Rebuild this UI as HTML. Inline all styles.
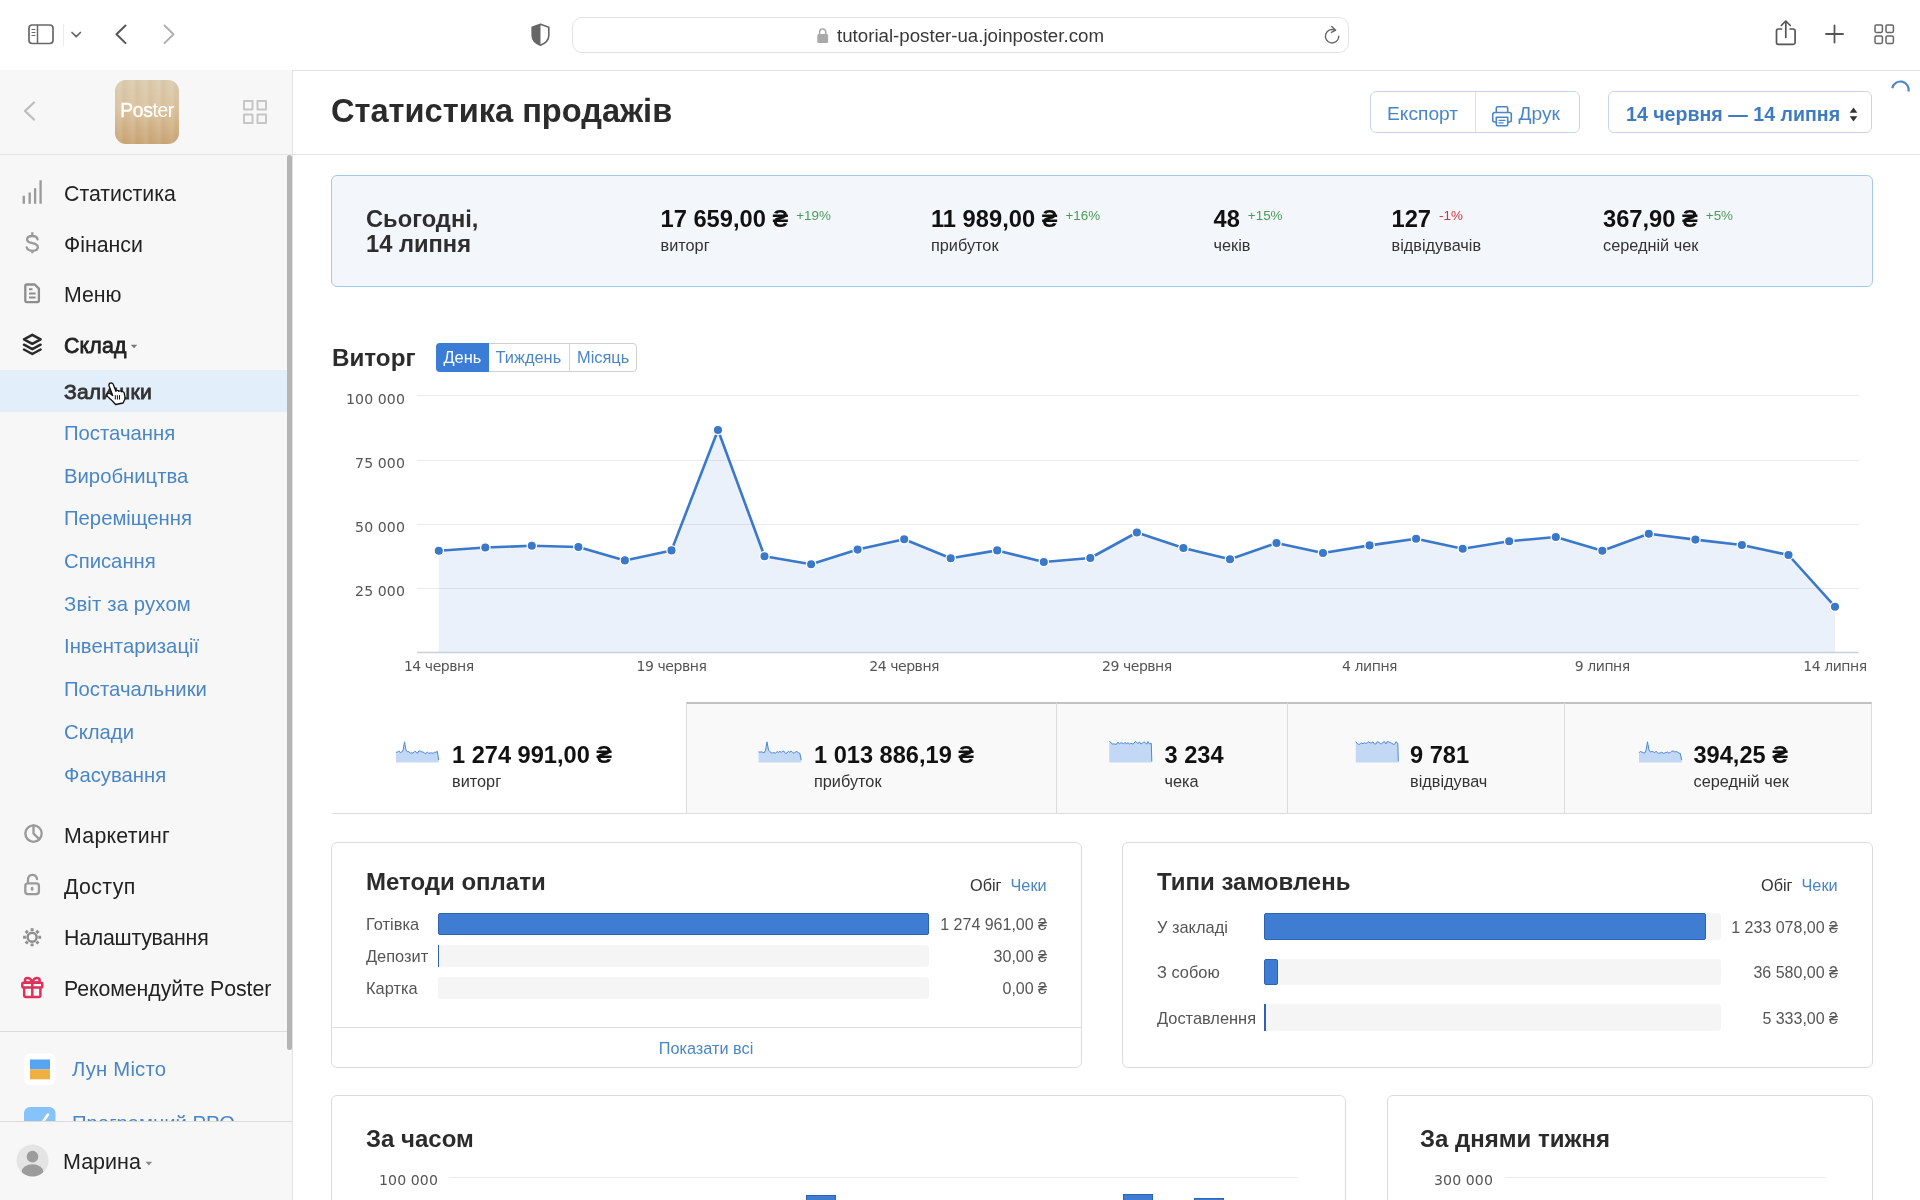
<!DOCTYPE html>
<html lang="uk">
<head>
<meta charset="utf-8">
<title>Статистика продажів</title>
<style>
*{box-sizing:border-box;margin:0;padding:0}
html,body{width:1920px;height:1200px;overflow:hidden;background:#fff}
body{font-family:"Liberation Sans",sans-serif;color:#222;position:relative}
.a{position:absolute;white-space:nowrap}
.dv{font-family:"DejaVu Sans","Liberation Sans",sans-serif}
svg{position:absolute;overflow:visible}
#root{position:absolute;left:0;top:0;width:1920px;height:1200px;overflow:hidden;will-change:transform}
/* browser chrome */
#chrome{left:0;top:0;width:1920px;height:70.5px;background:#fff;border-bottom:1.5px solid #e2e2e2}
#url{left:572px;top:16.5px;width:776.5px;height:36.5px;border:1.5px solid #e2e2e2;border-radius:10px;background:#fff}
#urltxt{left:837px;top:25px;font-size:18.7px;line-height:22px;color:#383838}
/* sidebar */
#side{left:0;top:70px;width:293px;height:1130px;background:#f7f7f7;border-right:1px solid #e2e2e2}
#sidehead{left:0;top:70px;width:292px;height:85px;border-bottom:1px solid #e4e4e4}
#logo{left:115px;top:80px;width:64px;height:64px;border-radius:11px;background:repeating-linear-gradient(90deg,rgba(255,255,255,0) 0,rgba(255,255,255,.08) 5px,rgba(150,110,60,.06) 9px,rgba(255,255,255,0) 13px),linear-gradient(180deg,#dcccb0 0%,#dac3a0 45%,#c9a575 100%);overflow:hidden}
#logo span{position:absolute;left:5.3px;top:19px;font-size:19.3px;line-height:24px;color:#fff;letter-spacing:-0.35px}
#logo b{font-weight:normal;-webkit-text-stroke:0.4px #fff}
.mi{left:64px;font-size:21.3px;line-height:26px;color:#222}
.sm{left:64px;font-size:20.3px;line-height:26px;color:#4a86c5}
#sel{left:0;top:369.5px;width:287px;height:42px;background:#e3eefb}
#scroll{left:287px;top:155px;width:5px;height:895px;background:#b4b4b4;border-radius:3px}
#sdiv{left:0;top:1031px;width:287px;height:1px;background:#dcdcdc}
#foot{left:0;top:1121px;width:292px;height:79px;background:#f7f7f7;border-top:1px solid #dcdcdc}
/* main */
#mainhead{left:293px;top:154px;width:1627px;height:1px;background:#e6e6e6}
#title{left:331px;top:92px;font-size:32.6px;line-height:38px;font-weight:bold;color:#2b2b2b}
.btn{border:1px solid #c8d5e6;border-radius:6px;background:#fff;color:#4a86c5;font-size:19.2px;line-height:40px;height:42px}
#today{left:331px;top:175px;width:1542px;height:112px;background:#f3f7fc;border:1px solid #a8c9e6;border-radius:6px}
.tv{font-size:23.7px;line-height:28px;font-weight:bold;color:#111;top:205px}
.tl{font-size:16.3px;line-height:20px;color:#333;top:235px}
.pc{font-size:13.4px;line-height:16px;top:207px}
.g{color:#4c9a57}.r{color:#d0343a}
.h2{font-size:24px;line-height:30px;font-weight:bold;color:#2b2b2b}
.ax{font-size:14.1px;line-height:18px;color:#555;font-family:"DejaVu Sans","Liberation Sans",sans-serif;letter-spacing:0.1px}
.axx{letter-spacing:-0.45px;font-size:14px}
.card{border:1px solid #dcdcdc;border-radius:6px;background:#fff}
.bl{font-size:16.4px;line-height:20px;color:#555}
.bv{font-size:16px;line-height:20px;color:#555;text-align:right;margin-top:1px}
.track{height:22px;background:#f5f5f5;border-radius:3px}
.fill{height:22px;background:#3f7dd3;border:1px solid #2e62b3;border-radius:2px}
.sv{font-size:23.6px;line-height:28px;font-weight:bold;color:#111}
.sl{font-size:16.3px;line-height:20px;color:#333;margin-top:1px}
</style>
</head>
<body>
<div id="root">
<!-- BROWSER CHROME -->
<div id="chrome" class="a"></div>
<div id="url" class="a"></div>
<div id="urltxt" class="a">tutorial-poster-ua.joinposter.com</div>

<svg class="a" style="left:0;top:0" width="1920" height="70" viewBox="0 0 1920 70" fill="none" stroke-linecap="round" stroke-linejoin="round">
 <!-- sidebar toggle -->
 <rect x="29" y="25" width="24" height="18.5" rx="3.2" stroke="#686868" stroke-width="1.7"/>
 <path d="M37.5 25.5V43" stroke="#686868" stroke-width="1.5"/>
 <path d="M32 29.5h3M32 32.5h3M32 35.5h3" stroke="#686868" stroke-width="1.2"/>
 <path d="M63.5 24v22" stroke="#ececec" stroke-width="1"/>
 <path d="M72 32.5l4.2 4.2 4.2-4.2" stroke="#666" stroke-width="1.7"/>
 <path d="M125.5 25.5l-9 8.8 9 8.8" stroke="#555" stroke-width="2"/>
 <path d="M164.5 25.5l9 8.8-9 8.8" stroke="#b0b0b0" stroke-width="2"/>
 <!-- shield -->
 <path d="M540.5 24.2l8.3 3v8.2c0 4.6-3.6 7.9-8.3 9.8-4.700-1.900-8.300-5.200-8.300-9.800v-8.200z" stroke="#666" stroke-width="1.6"/>
 <path d="M540.5 24.200v21c-4.700-1.900-8.300-5.200-8.300-9.800v-8.200z" fill="#666" stroke="none"/>
 <!-- lock -->
 <rect x="817.300" y="34" width="10.800" height="9" rx="1.500" fill="#a9a9a9"/>
 <path d="M819.600 34.500v-2.300a3.100 3.100 0 0 1 6.200 0v2.300" stroke="#a9a9a9" stroke-width="1.500"/>
 <!-- reload -->
 <path d="M1338.800 36.200a6.700 6.700 0 1 1-3.400-5.800" stroke="#666" stroke-width="1.400"/>
 <path d="M1331.800 26.500l3.800 3.700-4.200 2.200" stroke="#666" stroke-width="1.400"/>
 <!-- share -->
 <path d="M1781.500 29h-3.200a1.800 1.800 0 0 0-1.800 1.800v11.700a1.800 1.800 0 0 0 1.800 1.800h15a1.800 1.800 0 0 0 1.800-1.800v-11.700a1.800 1.800 0 0 0-1.800-1.800h-3.200" stroke="#555" stroke-width="1.700"/>
 <path d="M1785.800 37.500v-16M1781.300 25.500l4.500-4.500 4.500 4.500" stroke="#555" stroke-width="1.700"/>
 <!-- plus -->
 <path d="M1826 34h17M1834.500 25.500v17" stroke="#555" stroke-width="1.800"/>
 <!-- grid -->
 <rect x="1875" y="25" width="7.400" height="7.400" rx="1.300" stroke="#666" stroke-width="1.500"/>
 <rect x="1886" y="25" width="7.400" height="7.400" rx="1.300" stroke="#666" stroke-width="1.500"/>
 <rect x="1875" y="36" width="7.400" height="7.400" rx="1.300" stroke="#666" stroke-width="1.500"/>
 <rect x="1886" y="36" width="7.400" height="7.400" rx="1.300" stroke="#666" stroke-width="1.500"/>
</svg>


<!-- SIDEBAR -->
<div id="side" class="a"></div>
<div id="sidehead" class="a"></div>
<div id="logo" class="a"><span><b>Pos</b>ter</span></div>

<svg class="a" style="left:0;top:70px" width="293" height="1130" viewBox="0 70 293 1130" fill="none" stroke-linecap="round" stroke-linejoin="round">
 <!-- header back + grid -->
 <path d="M34 102.500l-9 8.500 9 8.500" stroke="#bdbdbd" stroke-width="2.300"/>
 <g stroke="#c6c6c6" stroke-width="2">
  <rect x="244" y="101" width="8.500" height="8.500"/><rect x="257.500" y="101" width="8.500" height="8.500"/>
  <rect x="244" y="114.500" width="8.500" height="8.500"/><rect x="257.500" y="114.500" width="8.500" height="8.500"/>
 </g>
 <!-- stats bars -->
 <g stroke="#9a9a9a" stroke-width="2.300" stroke-linecap="butt">
  <path d="M23.800 195.800v8M29.700 192.500v11.300M35.100 188.300v15.500M40.600 180.300v23.500"/>
 </g>
 <!-- dollar -->
 <path d="M37.600 239.300c-.5-2.200-2.500-3.300-5.300-3.300-3 0-5.200 1.300-5.200 3.500 0 2.300 2 3 5.200 3.600 3.300.7 5.600 1.500 5.600 4 0 2.300-2.200 3.700-5.500 3.700-3 0-5.100-1.200-5.700-3.500" stroke="#9a9a9a" stroke-width="2.300"/>
 <path d="M32.300 232.300v3.500M32.300 250v3.300" stroke="#9a9a9a" stroke-width="2.300" stroke-linecap="butt"/>
 <!-- document -->
 <path d="M26.800 284.500h8l4.100 4.100v12a1.500 1.500 0 0 1-1.500 1.500h-10.600a1.500 1.500 0 0 1-1.500-1.500v-14.600a1.500 1.500 0 0 1 1.500-1.500z" stroke="#8e8e8e" stroke-width="2.300"/>
 <path d="M29 289.200h3.500M29 293.400h6.600M29 297.600h6.600" stroke="#8e8e8e" stroke-width="2" stroke-linecap="butt"/>
 <!-- layers -->
 <g stroke="#2a2a2a" stroke-width="2.500">
  <path d="M32.300 334.800l8.300 4.500-8.300 4.500-8.300-4.500z"/>
  <path d="M24 344.700l8.300 4.500 8.300-4.500M24 349.500l8.300 4.500 8.300-4.500"/>
 </g>
 <path d="M130.800 344.700h6.400l-3.200 3.600z" fill="#777" stroke="none"/>
 <!-- pie -->
 <g stroke="#9a9a9a" stroke-width="2.300">
  <circle cx="33.500" cy="833.600" r="8.200"/>
  <path d="M33.500 825.500v8.100l5.800 5.600"/>
  <path d="M30 826.800a7.500 7.500 0 0 0 0 13.600" stroke-width="1.200"/>
 </g>
 <!-- unlock -->
 <g stroke="#9a9a9a" stroke-width="2.300">
  <rect x="25.300" y="883.300" width="13.600" height="10.800" rx="2.600"/>
  <path d="M28 883v-3.400a4.500 4.500 0 0 1 9-.6"/>
  <path d="M32.100 888v1.400" stroke-width="2.600"/>
 </g>
 <!-- gear -->
 <g stroke="#8e8e8e">
  <circle cx="32.1" cy="937.2" r="4.500" stroke-width="2.500"/>
  <path d="M38.30 937.20L41.10 937.20M36.48 941.58L38.46 943.56M32.10 943.40L32.10 946.20M27.72 941.58L25.74 943.56M25.90 937.20L23.10 937.20M27.72 932.82L25.74 930.84M32.10 931.00L32.10 928.20M36.48 932.82L38.46 930.84" stroke-width="3" stroke-linecap="butt"/>
 </g>
 <!-- gift -->
 <g stroke="#e0315b" stroke-width="2.500">
  <rect x="22.300" y="982.800" width="20" height="4.800" rx="1"/>
  <path d="M24.200 988v7.800a1.200 1.200 0 0 0 1.200 1.200h13.800a1.200 1.200 0 0 0 1.200-1.200v-7.800M32.300 983v14"/>
  <path d="M32.300 982.500c-1-3-2.500-4.600-4.700-4.600-1.600 0-2.700 1-2.700 2.300s1.100 2.300 2.700 2.300zM32.300 982.500c1-3 2.500-4.600 4.700-4.600 1.600 0 2.700 1 2.700 2.300s-1.100 2.300-2.700 2.300z"/>
 </g>
 <!-- Lun misto -->
 <rect x="24" y="1053.500" width="31.500" height="31.500" rx="6" fill="#fff" stroke="none"/>
 <rect x="30" y="1059.500" width="20" height="10" fill="#56a4f2" stroke="none"/>
 <rect x="30" y="1069.500" width="20" height="9.800" fill="#f0b040" stroke="none"/>
 <!-- prro -->
 <rect x="24" y="1107" width="31.500" height="31.500" rx="6" fill="#86c3fb" stroke="none"/>
 <path d="M43.500 1121l4.500-6.500" stroke="#fff" stroke-width="2.600"/>
</svg>

<div id="sel" class="a"></div>
<div class="a mi" style="top:181px">Статистика</div>
<div class="a mi" style="top:232px">Фінанси</div>
<div class="a mi" style="top:282px">Меню</div>
<div class="a mi" style="top:333px;-webkit-text-stroke:0.8px #222;letter-spacing:0.2px">Склад</div>
<div class="a sm" style="top:379px;color:#333;-webkit-text-stroke:0.8px #333;font-size:21.1px;letter-spacing:0.2px">Залишки</div>
<div class="a sm" style="top:420px">Постачання</div>
<div class="a sm" style="top:463px">Виробництва</div>
<div class="a sm" style="top:505px">Переміщення</div>
<div class="a sm" style="top:548px">Списання</div>
<div class="a sm" style="top:591px;letter-spacing:0.15px">Звіт за рухом</div>
<div class="a sm" style="top:633px">Інвентаризації</div>
<div class="a sm" style="top:676px">Постачальники</div>
<div class="a sm" style="top:719px">Склади</div>
<div class="a sm" style="top:762px">Фасування</div>
<div class="a mi" style="top:823px;letter-spacing:0.28px">Маркетинг</div>
<div class="a mi" style="top:874px;letter-spacing:0.37px">Доступ</div>
<div class="a mi" style="top:925px;letter-spacing:-0.23px">Налаштування</div>
<div class="a mi" style="top:976px;letter-spacing:-0.07px">Рекомендуйте Poster</div>
<div id="sdiv" class="a"></div>
<div class="a sm" style="left:72px;top:1056px;letter-spacing:0.2px">Лун Місто</div>
<div class="a sm" style="left:72px;top:1110px">Програмний РРО</div>
<div id="scroll" class="a"></div>
<div id="foot" class="a"></div>
<svg class="a" style="left:16px;top:1144px" width="33" height="33" viewBox="0 0 33 33">
 <defs><clipPath id="avc"><circle cx="16.500" cy="16.500" r="16"/></clipPath></defs>
 <circle cx="16.500" cy="16.500" r="16" fill="#e4e4e4"/>
 <g clip-path="url(#avc)" fill="#9c9c9c"><circle cx="16.500" cy="12.600" r="5.800"/><ellipse cx="16.500" cy="27.500" rx="10.800" ry="7.200"/></g>
</svg>
<svg class="a" style="left:145px;top:1161px" width="8" height="5" viewBox="0 0 8 5"><path d="M.6.700h6.600l-3.300 3.700z" fill="#8a8a8a"/></svg>
<div class="a mi" style="left:63px;top:1149px;font-size:21.5px">Марина</div>

<svg class="a" style="left:106px;top:382px" width="20" height="24" viewBox="0 0 20 24">
 <path d="M4.200 1.200c1.200-.5 2.600 0 3.100 1.300l2.600 6.800c.5-1 2.200-1.200 3 0 .7-.8 2.300-.6 2.800.5.800-.5 2.200 0 2.500 1.200l.7 3.500c.3 1.600 0 3-.8 4.300l-1 2.200-7.500 1.500c-2-2.500-4.500-5-7.500-7.500-1.200-1-1.500-2.300-.7-3.200.8-.9 2.200-.8 3.300.1l2 1.700-3.600-9.600c-.4-1.200 0-2.300 1.100-2.800z" fill="#fff" stroke="#111" stroke-width="1.300" stroke-linejoin="round"/>
 <path d="M9.300 13.200v4.300M11.400 13.200v4.300M13.500 13.200v4.300" stroke="#111" stroke-width="1"/>
</svg>
<!-- MAIN HEADER -->
<div id="mainhead" class="a"></div>
<div id="title" class="a">Статистика продажів</div>

<div class="a btn" style="left:1370px;top:91px;width:210px"></div>
<div class="a" style="left:1475px;top:92px;width:1px;height:40px;background:#d3e1f1"></div>
<div class="a" style="left:1387px;top:103px;font-size:19.2px;line-height:22px;color:#4a86c5">Експорт</div>
<svg class="a" style="left:1491px;top:104px" width="22" height="24" viewBox="0 0 22 24" fill="none" stroke="#4a86c5" stroke-width="1.600" stroke-linejoin="round" stroke-linecap="round">
 <path d="M5.300 8.500v-4.200a1.500 1.500 0 0 1 1.500-1.500h8.400a1.500 1.500 0 0 1 1.500 1.500v4.200"/>
 <path d="M5.300 18h-1.600a2 2 0 0 1-2-2v-5.500a2 2 0 0 1 2-2h14.600a2 2 0 0 1 2 2v5.500a2 2 0 0 1-2 2h-1.600"/>
 <path d="M5.300 13.200h11.400v7.300a1.200 1.200 0 0 1-1.200 1.200h-9a1.200 1.200 0 0 1-1.200-1.200z"/>
 <path d="M8 16.300h6M8 18.900h4" stroke-width="1.300"/>
</svg>
<div class="a" style="left:1518.5px;top:103px;font-size:19.2px;line-height:22px;color:#4a86c5">Друк</div>
<div class="a btn" style="left:1608px;top:91px;width:264px"></div>
<div class="a" style="left:1626px;top:103px;font-size:19.6px;line-height:22px;color:#3f7bc0;font-weight:bold">14 червня — 14 липня</div>
<svg class="a" style="left:1849px;top:107px" width="9" height="15" viewBox="0 0 9 15"><path d="M4.500 .5l3.800 5.300h-7.600zM4.500 14.500l3.800-5.300h-7.600z" fill="#333"/></svg>
<svg class="a" style="left:0;top:70px" width="1920" height="40" viewBox="0 70 1920 40" fill="none"><path d="M1892.300 88.200A8.300 8.300 0 0 1 1908.600 91.500" stroke="#4a86c8" stroke-width="2.200"/></svg>


<!-- TODAY -->
<div id="today" class="a"></div>

<div class="a" style="left:366px;top:207px;font-size:23.7px;line-height:25.3px;font-weight:bold;color:#2e2e2e;white-space:normal;width:200px">Сьогодні,<br>14 липня</div>
<div class="a tv" style="left:660.5px">17 659,00 ₴<span class="pc g" style="font-weight:normal;font-size:13.4px;position:relative;top:-7.5px;margin-left:8px">+19%</span></div>
<div class="a tl" style="left:660.5px">виторг</div>
<div class="a tv" style="left:931px">11 989,00 ₴<span class="pc g" style="font-weight:normal;font-size:13.4px;position:relative;top:-7.5px;margin-left:8px">+16%</span></div>
<div class="a tl" style="left:931px">прибуток</div>
<div class="a tv" style="left:1213.5px">48<span class="pc g" style="font-weight:normal;font-size:13.4px;position:relative;top:-7.5px;margin-left:8px">+15%</span></div>
<div class="a tl" style="left:1213.5px">чеків</div>
<div class="a tv" style="left:1391.5px">127<span class="pc r" style="font-weight:normal;font-size:13.4px;position:relative;top:-7.5px;margin-left:8px">-1%</span></div>
<div class="a tl" style="left:1391.5px">відвідувачів</div>
<div class="a tv" style="left:1603px">367,90 ₴<span class="pc g" style="font-weight:normal;font-size:13.4px;position:relative;top:-7.5px;margin-left:8px">+5%</span></div>
<div class="a tl" style="left:1603px">середній чек</div>


<!-- CHART -->

<div class="a h2" style="left:332px;top:343px;font-size:24.2px">Виторг</div>
<div class="a" style="left:436px;top:343px;width:201px;height:29px;border:1px solid #d0d0d0;border-radius:4px;background:#fff"></div>
<div class="a" style="left:436px;top:343px;width:53px;height:29px;background:#3b7dd6;border-radius:4px 0 0 4px"></div>
<div class="a" style="left:569px;top:344px;width:1px;height:27px;background:#d6d6d6"></div>
<div class="a" style="left:443.500px;top:348px;font-size:16.400px;line-height:19px;color:#fff">День</div>
<div class="a" style="left:495.500px;top:348px;font-size:16.400px;line-height:19px;color:#4a86c5">Тиждень</div>
<div class="a" style="left:577px;top:348px;font-size:16.400px;line-height:19px;color:#4a86c5">Місяць</div>
<svg class="a" style="left:0;top:0" width="1920" height="700" viewBox="0 0 1920 700" fill="none">
 <path d="M417 395.5H1858.5" stroke="#ebebeb" stroke-width="1.2"/><path d="M417 460.5H1858.5" stroke="#ebebeb" stroke-width="1.2"/><path d="M417 524.5H1858.5" stroke="#ebebeb" stroke-width="1.2"/><path d="M417 588.5H1858.5" stroke="#ebebeb" stroke-width="1.2"/>
 <path d="M438.8 550.8 L485.3 547.5 L531.8 545.8 L578.4 547.0 L624.9 560.4 L671.5 550.4 L718.0 430.0 L764.5 556.2 L811.1 564.2 L857.6 549.6 L904.2 539.2 L950.7 558.3 L997.2 550.4 L1043.8 562.0 L1090.3 558.0 L1136.9 532.5 L1183.4 548.0 L1230.0 559.2 L1276.5 543.0 L1323.0 553.0 L1369.6 545.4 L1416.1 538.8 L1462.7 548.8 L1509.2 541.2 L1555.8 537.0 L1602.3 550.8 L1648.8 533.8 L1695.4 539.6 L1741.9 545.0 L1788.5 555.0 L1835.0 606.7 L1835.0 652.5 L438.8 652.5 Z" fill="#3b7ad0" fill-opacity="0.1" stroke="none"/>
 <path d="M417 652.500H1858.500" stroke="#c5cfdd" stroke-width="1.500"/>
 <path d="M438.8 550.8 L485.3 547.5 L531.8 545.8 L578.4 547.0 L624.9 560.4 L671.5 550.4 L718.0 430.0 L764.5 556.2 L811.1 564.2 L857.6 549.6 L904.2 539.2 L950.7 558.3 L997.2 550.4 L1043.8 562.0 L1090.3 558.0 L1136.9 532.5 L1183.4 548.0 L1230.0 559.2 L1276.5 543.0 L1323.0 553.0 L1369.6 545.4 L1416.1 538.8 L1462.7 548.8 L1509.2 541.2 L1555.8 537.0 L1602.3 550.8 L1648.8 533.8 L1695.4 539.6 L1741.9 545.0 L1788.5 555.0 L1835.0 606.7" stroke="#3a78ca" stroke-width="2.600" stroke-linejoin="round" stroke-linecap="round"/>
 <g fill="#3a78ca" stroke="#fff" stroke-width="1.300"><circle cx="438.8" cy="550.8" r="4.700"/><circle cx="485.3" cy="547.5" r="4.700"/><circle cx="531.8" cy="545.8" r="4.700"/><circle cx="578.4" cy="547.0" r="4.700"/><circle cx="624.9" cy="560.4" r="4.700"/><circle cx="671.5" cy="550.4" r="4.700"/><circle cx="718.0" cy="430.0" r="4.700"/><circle cx="764.5" cy="556.2" r="4.700"/><circle cx="811.1" cy="564.2" r="4.700"/><circle cx="857.6" cy="549.6" r="4.700"/><circle cx="904.2" cy="539.2" r="4.700"/><circle cx="950.7" cy="558.3" r="4.700"/><circle cx="997.2" cy="550.4" r="4.700"/><circle cx="1043.8" cy="562.0" r="4.700"/><circle cx="1090.3" cy="558.0" r="4.700"/><circle cx="1136.9" cy="532.5" r="4.700"/><circle cx="1183.4" cy="548.0" r="4.700"/><circle cx="1230.0" cy="559.2" r="4.700"/><circle cx="1276.5" cy="543.0" r="4.700"/><circle cx="1323.0" cy="553.0" r="4.700"/><circle cx="1369.6" cy="545.4" r="4.700"/><circle cx="1416.1" cy="538.8" r="4.700"/><circle cx="1462.7" cy="548.8" r="4.700"/><circle cx="1509.2" cy="541.2" r="4.700"/><circle cx="1555.8" cy="537.0" r="4.700"/><circle cx="1602.3" cy="550.8" r="4.700"/><circle cx="1648.8" cy="533.8" r="4.700"/><circle cx="1695.4" cy="539.6" r="4.700"/><circle cx="1741.9" cy="545.0" r="4.700"/><circle cx="1788.5" cy="555.0" r="4.700"/><circle cx="1835.0" cy="606.7" r="4.700"/></g>
</svg>
<div class="a ax" style="left:305px;width:100px;text-align:right;top:390.0px">100 000</div>
<div class="a ax" style="left:305px;width:100px;text-align:right;top:454.0px">75 000</div>
<div class="a ax" style="left:305px;width:100px;text-align:right;top:518.0px">50 000</div>
<div class="a ax" style="left:305px;width:100px;text-align:right;top:582.0px">25 000</div>
<div class="a ax axx" style="left:378.8px;width:120px;text-align:center;top:657px">14 червня</div>
<div class="a ax axx" style="left:611.5px;width:120px;text-align:center;top:657px">19 червня</div>
<div class="a ax axx" style="left:844.2px;width:120px;text-align:center;top:657px">24 червня</div>
<div class="a ax axx" style="left:1076.9px;width:120px;text-align:center;top:657px">29 червня</div>
<div class="a ax axx" style="left:1309.6px;width:120px;text-align:center;top:657px">4 липня</div>
<div class="a ax axx" style="left:1542.3px;width:120px;text-align:center;top:657px">9 липня</div>
<div class="a ax axx" style="left:1775.0px;width:120px;text-align:center;top:657px">14 липня</div>


<!-- SUMMARY -->

<div class="a" style="left:686px;top:702px;width:1186px;height:112px;background:#f9f9f9;border:1px solid #dcdcdc;border-top:2px solid #c2c2c2"></div>
<div class="a" style="left:1056px;top:703px;width:1px;height:110px;background:#dcdcdc"></div>
<div class="a" style="left:1287px;top:703px;width:1px;height:110px;background:#dcdcdc"></div>
<div class="a" style="left:1564px;top:703px;width:1px;height:110px;background:#dcdcdc"></div>
<div class="a" style="left:332px;top:813px;width:355px;height:1px;background:#dedede"></div>
<svg class="a" style="left:0;top:700px" width="1920" height="120" viewBox="0 700 1920 120">
<path d="M396.0 752.3 L397.4 752.1 L398.8 751.1 L400.3 752.3 L401.7 752.2 L403.1 750.1 L404.5 741.8 L406.0 750.1 L407.4 751.9 L408.8 751.5 L410.2 753.2 L411.7 752.7 L413.1 753.2 L414.5 751.4 L415.9 751.7 L417.4 753.3 L418.8 751.0 L420.2 751.0 L421.6 751.8 L423.0 751.9 L424.5 753.1 L425.9 753.4 L427.3 752.1 L428.7 753.3 L430.2 753.0 L431.6 752.8 L433.0 753.4 L434.4 752.3 L435.9 752.3 L437.3 751.3 L438.7 760.1 L438.7 762.5999999999999 L396.0 762.5999999999999 Z" fill="#c3d8f5" stroke="none"/><path d="M396.0 752.3 L397.4 752.1 L398.8 751.1 L400.3 752.3 L401.7 752.2 L403.1 750.1 L404.5 741.8 L406.0 750.1 L407.4 751.9 L408.8 751.5 L410.2 753.2 L411.7 752.7 L413.1 753.2 L414.5 751.4 L415.9 751.7 L417.4 753.3 L418.8 751.0 L420.2 751.0 L421.6 751.8 L423.0 751.9 L424.5 753.1 L425.9 753.4 L427.3 752.1 L428.7 753.3 L430.2 753.0 L431.6 752.8 L433.0 753.4 L434.4 752.3 L435.9 752.3 L437.3 751.3 L438.7 760.1" stroke="#4a88d6" stroke-width="1" fill="none" stroke-linejoin="round"/><path d="M758.5 751.8 L759.9 752.2 L761.3 751.8 L762.8 752.3 L764.2 752.8 L765.6 750.1 L767.0 741.8 L768.5 750.1 L769.9 751.7 L771.3 752.7 L772.7 752.9 L774.2 752.7 L775.6 753.3 L777.0 751.5 L778.4 752.4 L779.9 751.3 L781.3 752.5 L782.7 751.1 L784.1 751.3 L785.5 753.4 L787.0 752.9 L788.4 751.2 L789.8 752.3 L791.2 751.0 L792.7 752.5 L794.1 753.3 L795.5 751.9 L796.9 751.5 L798.4 752.8 L799.8 753.2 L801.2 760.1 L801.2 762.5999999999999 L758.5 762.5999999999999 Z" fill="#c3d8f5" stroke="none"/><path d="M758.5 751.8 L759.9 752.2 L761.3 751.8 L762.8 752.3 L764.2 752.8 L765.6 750.1 L767.0 741.8 L768.5 750.1 L769.9 751.7 L771.3 752.7 L772.7 752.9 L774.2 752.7 L775.6 753.3 L777.0 751.5 L778.4 752.4 L779.9 751.3 L781.3 752.5 L782.7 751.1 L784.1 751.3 L785.5 753.4 L787.0 752.9 L788.4 751.2 L789.8 752.3 L791.2 751.0 L792.7 752.5 L794.1 753.3 L795.5 751.9 L796.9 751.5 L798.4 752.8 L799.8 753.2 L801.2 760.1" stroke="#4a88d6" stroke-width="1" fill="none" stroke-linejoin="round"/><path d="M1109.3 741.5 L1110.7 742.2 L1112.2 744.1 L1113.6 743.8 L1115.0 744.2 L1116.5 744.3 L1117.9 742.1 L1119.3 744.0 L1120.8 742.8 L1122.2 743.1 L1123.6 743.9 L1125.1 742.3 L1126.5 744.1 L1127.9 742.5 L1129.4 744.2 L1130.8 743.2 L1132.2 743.9 L1133.7 743.7 L1135.1 741.5 L1136.5 742.1 L1138.0 743.6 L1139.4 741.8 L1140.8 743.9 L1142.3 743.3 L1143.7 741.9 L1145.1 742.5 L1146.6 744.2 L1148.0 741.5 L1149.4 743.9 L1151.3 743.4 L1151.8 761.5 L1152.3 762.5999999999999 L1109.3 762.5999999999999 Z" fill="#c3d8f5" stroke="none"/><path d="M1109.3 741.5 L1110.7 742.2 L1112.2 744.1 L1113.6 743.8 L1115.0 744.2 L1116.5 744.3 L1117.9 742.1 L1119.3 744.0 L1120.8 742.8 L1122.2 743.1 L1123.6 743.9 L1125.1 742.3 L1126.5 744.1 L1127.9 742.5 L1129.4 744.2 L1130.8 743.2 L1132.2 743.9 L1133.7 743.7 L1135.1 741.5 L1136.5 742.1 L1138.0 743.6 L1139.4 741.8 L1140.8 743.9 L1142.3 743.3 L1143.7 741.9 L1145.1 742.5 L1146.6 744.2 L1148.0 741.5 L1149.4 743.9 L1151.3 743.4 L1151.8 761.5" stroke="#4a88d6" stroke-width="1" fill="none" stroke-linejoin="round"/><path d="M1355.8 741.5 L1357.2 743.6 L1358.7 744.3 L1360.1 744.2 L1361.5 742.7 L1363.0 743.8 L1364.4 742.7 L1365.8 743.4 L1367.3 743.1 L1368.7 741.6 L1370.1 743.0 L1371.6 742.8 L1373.0 741.9 L1374.4 743.9 L1375.9 744.0 L1377.3 741.7 L1378.7 742.0 L1380.2 743.7 L1381.6 743.9 L1383.0 742.2 L1384.5 741.6 L1385.9 743.9 L1387.3 741.6 L1388.8 741.8 L1390.2 742.7 L1391.6 743.2 L1393.1 744.2 L1394.5 744.4 L1395.9 741.6 L1397.8 743.4 L1398.3 761.5 L1398.8 762.5999999999999 L1355.8 762.5999999999999 Z" fill="#c3d8f5" stroke="none"/><path d="M1355.8 741.5 L1357.2 743.6 L1358.7 744.3 L1360.1 744.2 L1361.5 742.7 L1363.0 743.8 L1364.4 742.7 L1365.8 743.4 L1367.3 743.1 L1368.7 741.6 L1370.1 743.0 L1371.6 742.8 L1373.0 741.9 L1374.4 743.9 L1375.9 744.0 L1377.3 741.7 L1378.7 742.0 L1380.2 743.7 L1381.6 743.9 L1383.0 742.2 L1384.5 741.6 L1385.9 743.9 L1387.3 741.6 L1388.8 741.8 L1390.2 742.7 L1391.6 743.2 L1393.1 744.2 L1394.5 744.4 L1395.9 741.6 L1397.8 743.4 L1398.3 761.5" stroke="#4a88d6" stroke-width="1" fill="none" stroke-linejoin="round"/><path d="M1639.0 752.8 L1640.4 751.4 L1641.8 752.0 L1643.3 752.7 L1644.7 753.0 L1646.1 750.1 L1647.5 741.8 L1649.0 750.1 L1650.4 752.1 L1651.8 751.3 L1653.2 751.9 L1654.7 752.7 L1656.1 751.2 L1657.5 752.9 L1658.9 753.4 L1660.3 752.8 L1661.8 752.3 L1663.2 753.3 L1664.6 753.0 L1666.0 752.5 L1667.5 752.0 L1668.9 753.1 L1670.3 752.5 L1671.7 751.2 L1673.2 751.0 L1674.6 751.8 L1676.0 751.7 L1677.4 752.0 L1678.9 753.1 L1680.3 753.4 L1681.7 760.1 L1681.7 762.5999999999999 L1639.0 762.5999999999999 Z" fill="#c3d8f5" stroke="none"/><path d="M1639.0 752.8 L1640.4 751.4 L1641.8 752.0 L1643.3 752.7 L1644.7 753.0 L1646.1 750.1 L1647.5 741.8 L1649.0 750.1 L1650.4 752.1 L1651.8 751.3 L1653.2 751.9 L1654.7 752.7 L1656.1 751.2 L1657.5 752.9 L1658.9 753.4 L1660.3 752.8 L1661.8 752.3 L1663.2 753.3 L1664.6 753.0 L1666.0 752.5 L1667.5 752.0 L1668.9 753.1 L1670.3 752.5 L1671.7 751.2 L1673.2 751.0 L1674.6 751.8 L1676.0 751.7 L1677.4 752.0 L1678.9 753.1 L1680.3 753.4 L1681.7 760.1" stroke="#4a88d6" stroke-width="1" fill="none" stroke-linejoin="round"/>
</svg>
<div class="a sv" style="left:452px;top:741px">1 274 991,00 ₴</div><div class="a sl" style="left:452px;top:770px">виторг</div>
<div class="a sv" style="left:814px;top:741px">1 013 886,19 ₴</div><div class="a sl" style="left:814px;top:770px">прибуток</div>
<div class="a sv" style="left:1164.5px;top:741px">3 234</div><div class="a sl" style="left:1164.5px;top:770px">чека</div>
<div class="a sv" style="left:1410px;top:741px">9 781</div><div class="a sl" style="left:1410px;top:770px">відвідувач</div>
<div class="a sv" style="left:1693.5px;top:741px">394,25 ₴</div><div class="a sl" style="left:1693.5px;top:770px">середній чек</div>


<!-- CARDS -->

<div class="a card" style="left:331px;top:842px;width:751px;height:226px"></div>
<div class="a" style="left:332px;top:1027px;width:749px;height:1px;background:#dedede"></div>
<div class="a h2" style="left:366px;top:867px">Методи оплати</div>
<div class="a" style="left:970px;top:875px;font-size:16.300px;line-height:20px;color:#333">Обіг</div>
<div class="a" style="left:1010.500px;top:875px;font-size:16.300px;line-height:20px;color:#4a86c5">Чеки</div>
<div class="a bl" style="left:366px;top:914px">Готівка</div>
<div class="a track" style="left:438px;top:913.0px;width:491px;height:21.500px"></div>
<div class="a fill" style="left:438px;top:913.0px;width:491px;height:21.500px"></div>
<div class="a bv" style="left:897px;width:150px;top:914px">1 274 961,00 ₴</div>
<div class="a bl" style="left:366px;top:946px">Депозит</div>
<div class="a track" style="left:438px;top:945.0px;width:491px;height:21.500px"></div>
<div class="a" style="left:437.500px;top:945px;width:1.500px;height:21.500px;background:#2e62b3"></div>
<div class="a bv" style="left:897px;width:150px;top:946px">30,00 ₴</div>
<div class="a bl" style="left:366px;top:978px">Картка</div>
<div class="a track" style="left:438px;top:977.0px;width:491px;height:21.500px"></div>
<div class="a bv" style="left:897px;width:150px;top:978px">0,00 ₴</div>
<div class="a" style="left:606px;width:200px;text-align:center;top:1038px;font-size:16.300px;line-height:20px;color:#4a86c5">Показати всі</div>

<div class="a card" style="left:1122px;top:842px;width:751px;height:226px"></div>
<div class="a h2" style="left:1157px;top:867px">Типи замовлень</div>
<div class="a" style="left:1761px;top:875px;font-size:16.300px;line-height:20px;color:#333">Обіг</div>
<div class="a" style="left:1801.500px;top:875px;font-size:16.300px;line-height:20px;color:#4a86c5">Чеки</div>
<div class="a bl" style="left:1157px;top:917px">У закладі</div>
<div class="a track" style="left:1264px;top:913px;width:456.500px;height:26.500px"></div>
<div class="a fill" style="left:1264px;top:913px;width:442px;height:26.500px"></div>
<div class="a bv" style="left:1688px;width:150px;top:917px">1 233 078,00 ₴</div>
<div class="a bl" style="left:1157px;top:962px">З собою</div>
<div class="a track" style="left:1264px;top:958.500px;width:456.500px;height:26.500px"></div>
<div class="a fill" style="left:1264px;top:958.500px;width:13.500px;height:26.500px"></div>
<div class="a bv" style="left:1688px;width:150px;top:962px">36 580,00 ₴</div>
<div class="a bl" style="left:1157px;top:1007.500px">Доставлення</div>
<div class="a track" style="left:1264px;top:1004px;width:456.500px;height:26.500px"></div>
<div class="a" style="left:1263.500px;top:1004px;width:2px;height:26.500px;background:#2e62b3"></div>
<div class="a bv" style="left:1688px;width:150px;top:1007.500px">5 333,00 ₴</div>

<div class="a card" style="left:331px;top:1095px;width:1015px;height:130px"></div>
<div class="a h2" style="left:366px;top:1124px">За часом</div>
<div class="a ax" style="left:338px;width:100px;text-align:right;top:1171px">100 000</div>
<div class="a" style="left:449px;top:1177px;width:849px;height:1.200px;background:#ececec"></div>
<div class="a" style="left:806px;top:1195px;width:30px;height:10px;background:#3f7dd3;border:1px solid #2e62b3"></div>
<div class="a" style="left:1123px;top:1193.500px;width:30px;height:10px;background:#3f7dd3;border:1px solid #2e62b3"></div>
<div class="a" style="left:1194px;top:1198px;width:30px;height:10px;background:#3f7dd3;border:1px solid #2e62b3"></div>

<div class="a card" style="left:1386.500px;top:1095px;width:486.500px;height:130px"></div>
<div class="a h2" style="left:1420px;top:1124px">За днями тижня</div>
<div class="a ax" style="left:1393px;width:100px;text-align:right;top:1171px">300 000</div>
<div class="a" style="left:1505px;top:1177px;width:321px;height:1.200px;background:#ececec"></div>


</div>
</body>
</html>
